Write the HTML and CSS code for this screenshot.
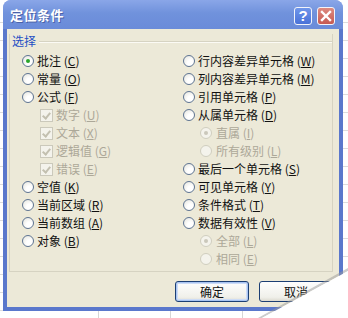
FILE: index.html
```html
<!DOCTYPE html>
<html lang="zh-CN">
<head>
    <meta charset="UTF-8">
    <title>定位条件</title>
    <link rel="stylesheet" href="styles.css">
</head>
<body>
    <div class="screen">
        <div class="dialog">
            <!-- Judul jendela -->
            <div class="titlebar">
                <span class="title">定位条件</span>
                <div class="tb-btns">
                    <span class="tb-btn help">?</span>
                    <span class="tb-btn close">
                        <svg width="12" height="12" viewBox="0 0 12 12">
                            <path d="M2 2 L10 10 M10 2 L2 10" stroke="#fff" stroke-width="2.4" stroke-linecap="square"/>
                        </svg>
                    </span>
                </div>
            </div>

            <div class="client">
                <div class="group">
                    <div class="group-head">
                        <span class="group-label">选择</span>
                        <span class="group-line"></span>
                    </div>
                    <div class="cols">
                        <div class="col left">
                            <div class="row"><span class="radio checked"></span>批注 (<u>C</u>)</div>
                            <div class="row"><span class="radio"></span>常量 (<u>O</u>)</div>
                            <div class="row"><span class="radio"></span>公式 (<u>F</u>)</div>
                            <div class="row sub disabled"><span class="check"></span>数字 (<u>U</u>)</div>
                            <div class="row sub disabled"><span class="check"></span>文本 (<u>X</u>)</div>
                            <div class="row sub disabled"><span class="check"></span>逻辑值 (<u>G</u>)</div>
                            <div class="row sub disabled"><span class="check"></span>错误 (<u>E</u>)</div>
                            <div class="row"><span class="radio"></span>空值 (<u>K</u>)</div>
                            <div class="row"><span class="radio"></span>当前区域 (<u>R</u>)</div>
                            <div class="row"><span class="radio"></span>当前数组 (<u>A</u>)</div>
                            <div class="row"><span class="radio"></span>对象 (<u>B</u>)</div>
                        </div>
                        <div class="col right">
                            <div class="row"><span class="radio"></span>行内容差异单元格 (<u>W</u>)</div>
                            <div class="row"><span class="radio"></span>列内容差异单元格 (<u>M</u>)</div>
                            <div class="row"><span class="radio"></span>引用单元格 (<u>P</u>)</div>
                            <div class="row"><span class="radio"></span>从属单元格 (<u>D</u>)</div>
                            <div class="row sub disabled"><span class="radio checked"></span>直属 (<u>I</u>)</div>
                            <div class="row sub disabled"><span class="radio"></span>所有级别 (<u>L</u>)</div>
                            <div class="row"><span class="radio"></span>最后一个单元格 (<u>S</u>)</div>
                            <div class="row"><span class="radio"></span>可见单元格 (<u>Y</u>)</div>
                            <div class="row"><span class="radio"></span>条件格式 (<u>T</u>)</div>
                            <div class="row"><span class="radio"></span>数据有效性 (<u>V</u>)</div>
                            <div class="row sub disabled"><span class="radio checked"></span>全部 (<u>L</u>)</div>
                            <div class="row sub disabled"><span class="radio"></span>相同 (<u>E</u>)</div>
                        </div>
                    </div>
                </div>

                <div class="buttons">
                    <button class="btn default">确定</button>
                    <button class="btn">取消</button>
                </div>
            </div>
        </div>

        <!-- Lipatan halaman di pojok -->
        <div class="curl-shadow"></div>
        <div class="curl"></div>
    </div>
</body>
</html>
```

FILE: styles.css
```css
/* Dasar halaman */
body {
    margin: 0;
    font-family: "Noto Sans CJK SC", "Liberation Sans", sans-serif;
    font-size: 12px;
}

/* Latar lembar kerja */
.screen {
    width: 348px;
    height: 318px;
    position: relative;
    overflow: hidden;
    background-color: #fff;
    background-image:
        repeating-linear-gradient(to bottom, transparent 0 17px, #dcdcdc 17px 18px),
        repeating-linear-gradient(to right, transparent 0 71px, #d6d6d6 71px 72px);
    background-position: 0 5px, 27px 0;
}

/* Jendela dialog */
.dialog {
    margin-left: 3px;
    width: 340px;
    height: 311px;
    box-sizing: border-box;
    padding: 0 4px 4px;
    border-radius: 8px 8px 0 0;
    background: linear-gradient(#88a4e6, #6889da 29px, #5a78cc 29px);
    display: flex;
    flex-direction: column;
}

.titlebar {
    height: 29px;
    margin: 0 -4px;
    padding: 0 8px 0 7px;
    display: flex;
    align-items: center;
    justify-content: space-between;
    border-radius: 8px 8px 0 0;
    background: linear-gradient(#8aa6e8, #7092dc 45%, #6a8bd9);
}

.title {
    color: #fff;
    font-weight: bold;
    font-size: 13px;
    letter-spacing: 0.5px;
    text-shadow: 1px 1px 0 #4a62a8;
}

.tb-btns {
    display: flex;
    gap: 5px;
    margin-top: 2px;
}

.tb-btn {
    width: 16px;
    height: 16px;
    border: 1px solid #f2f4fa;
    border-radius: 3px;
    display: flex;
    align-items: center;
    justify-content: center;
    color: #fff;
    font-family: "Liberation Sans", sans-serif;
    font-weight: bold;
    font-size: 15px;
}

.help {
    background: linear-gradient(#6f96ea, #4a72d8);
}

.close {
    background: linear-gradient(#dd8a80, #c65a52);
}

/* Area isi */
.client {
    flex: 1;
    background: #ece9d8;
    padding: 5px 6px 0 2px;
}

/* Kotak grup */
.group {
    border: 1px solid #d6d3c2;
    border-top: none;
    padding: 0 0 3px 12px;
}

.group-head {
    display: flex;
    align-items: center;
    height: 14px;
    margin-left: -12px;
    margin-bottom: 4px;
}

.group-label {
    color: #1f4fc4;
    padding: 0 3px 0 2px;
    line-height: 14px;
}

.group-line {
    flex: 1;
    border-top: 1px solid #d6d3c2;
    border-bottom: 1px solid #fbfaf4;
    margin-top: 1px;
}

.cols {
    display: flex;
}

.col.left {
    width: 161px;
}

.row {
    height: 18px;
    line-height: 18px;
    display: flex;
    align-items: center;
    white-space: nowrap;
    color: #111;
}

.row u {
    text-decoration-thickness: 1px;
    text-underline-offset: 1px;
}

.row.disabled {
    color: #aca899;
}

.col.left .row.sub {
    padding-left: 18px;
}

.col.right .row.sub {
    padding-left: 17px;
}

/* Tombol radio gaya XP */
.radio {
    width: 10px;
    height: 10px;
    border: 1px solid #5e7492;
    border-radius: 50%;
    background: radial-gradient(circle at 65% 70%, #fff 0 30%, #e2e2da 100%);
    margin-right: 3px;
    flex: none;
    display: flex;
    align-items: center;
    justify-content: center;
}

.col.right .row.sub .radio {
    margin-right: 4px;
}

.radio.checked::after {
    content: "";
    width: 4px;
    height: 4px;
    border-radius: 50%;
    background: #2aa52a;
}

.disabled .radio {
    border-color: #d0cebf;
    background: #f4f3ec;
}

.disabled .radio.checked::after {
    background: #cac8bb;
}

/* Kotak centang (nonaktif) */
.check {
    width: 11px;
    height: 11px;
    border: 1px solid #cbc9bb;
    background: #f4f3ec;
    margin-right: 3px;
    flex: none;
    position: relative;
}

.check::after {
    content: "";
    position: absolute;
    left: 3px;
    top: 1px;
    width: 3px;
    height: 6px;
    border: solid #c3c0b0;
    border-width: 0 2px 2px 0;
    transform: rotate(40deg);
}

/* Tombol OK / Batal */
.buttons {
    display: flex;
    justify-content: flex-end;
    gap: 10px;
    margin-top: 9px;
}

.btn {
    width: 74px;
    height: 21px;
    border: 1px solid #1c3f74;
    border-radius: 3px;
    background: linear-gradient(#fefefe, #f0f0ea 80%, #dcdad0);
    font-family: "Noto Sans CJK SC", sans-serif;
    font-size: 12px;
    color: #111;
    padding: 0;
    line-height: 19px;
}

.btn.default {
    box-shadow: inset 0 0 0 1px #a9c4f2, inset 0 0 0 2px #cddcf6;
}

/* Lipatan halaman */
.curl {
    position: absolute;
    inset: 0;
    background: #fff;
    clip-path: polygon(262px 318px, 348px 271px, 348px 318px);
}

.curl-shadow {
    position: absolute;
    inset: 0;
    background: #9a9a9a;
    opacity: 0.5;
    clip-path: polygon(258px 318px, 348px 268px, 348px 271px, 262px 318px);
}
```
